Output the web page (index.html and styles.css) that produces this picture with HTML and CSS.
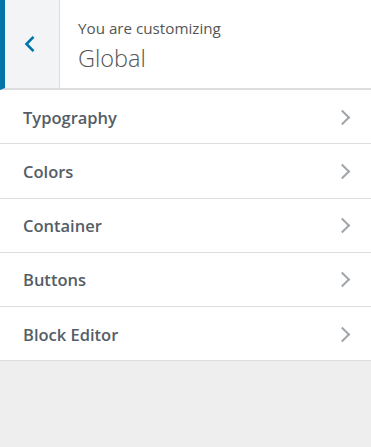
FILE: index.html
```html
<!DOCTYPE html>
<html lang="en">
<head>
  <meta charset="UTF-8" />
  <meta name="viewport" content="width=device-width, initial-scale=1.0"/>
  <title>Customizer - Global</title>
  <link rel="stylesheet" href="styles.css">
</head>
<body>

  <div class="panel-header">
    <button class="back-btn" aria-label="Back">
      <svg width="13" height="18" viewBox="0 0 13 18">
        <path d="M10.5 1.8 L3.5 9 L10.5 16.2" fill="none" stroke="#0073aa" stroke-width="2.6"/>
      </svg>
    </button>
    <div class="panel-title">
      <span class="customizing">You are customizing</span>
      <h2>Global</h2>
    </div>
  </div>

  <ul class="sections">
    <li class="section">Typography <span class="arrow"></span></li>
    <li class="section">Colors <span class="arrow"></span></li>
    <li class="section">Container <span class="arrow"></span></li>
    <li class="section">Buttons <span class="arrow"></span></li>
    <li class="section">Block Editor <span class="arrow"></span></li>
  </ul>

</body>
</html>
```

FILE: styles.css
```css
:root {
  --page-bg: #eeeeee;
  --border: #dddddd;
  --accent: #0073aa;
  --text-color: #555d66;
  --arrow-color: #a0a5aa;
}

body {
  margin: 0;
  font-family: "Open Sans", "Noto Sans", sans-serif;
  background-color: var(--page-bg);
  color: var(--text-color);
}

.panel-header {
  display: flex;
  height: 88px;
  background-color: white;
  border-left: 5px solid var(--accent);
  border-bottom: 2px solid var(--border);
}

.back-btn {
  width: 55px;
  border: none;
  border-right: 1px solid var(--border);
  background-color: #f3f4f5;
  padding: 0;
  display: flex;
  align-items: center;
  justify-content: center;
  padding-right: 5px;
  padding-top: 0;
  cursor: pointer;
}

.panel-title {
  padding: 17px 0 0 18px;
}

.customizing {
  display: block;
  font-size: 15.2px;
  color: #555;
  line-height: 22px;
}

.panel-title h2 {
  margin: 3px 0 0;
  font-size: 23.5px;
  font-weight: 300;
  color: #555;
  line-height: 32px;
}

.sections {
  list-style: none;
  margin: 0;
  padding: 0;
}

.section {
  display: flex;
  align-items: center;
  justify-content: space-between;
  height: 52.25px;
  padding: 1px 19px 0 23px;
  background-color: white;
  border-bottom: 1px solid var(--border);
  font-size: 16.5px;
  font-weight: 600;
  cursor: pointer;
}

.arrow {
  width: 9px;
  height: 9px;
  border-top: 2.5px solid var(--arrow-color);
  border-right: 2.5px solid var(--arrow-color);
  transform: rotate(45deg);
  margin-right: 4px;
}
```
